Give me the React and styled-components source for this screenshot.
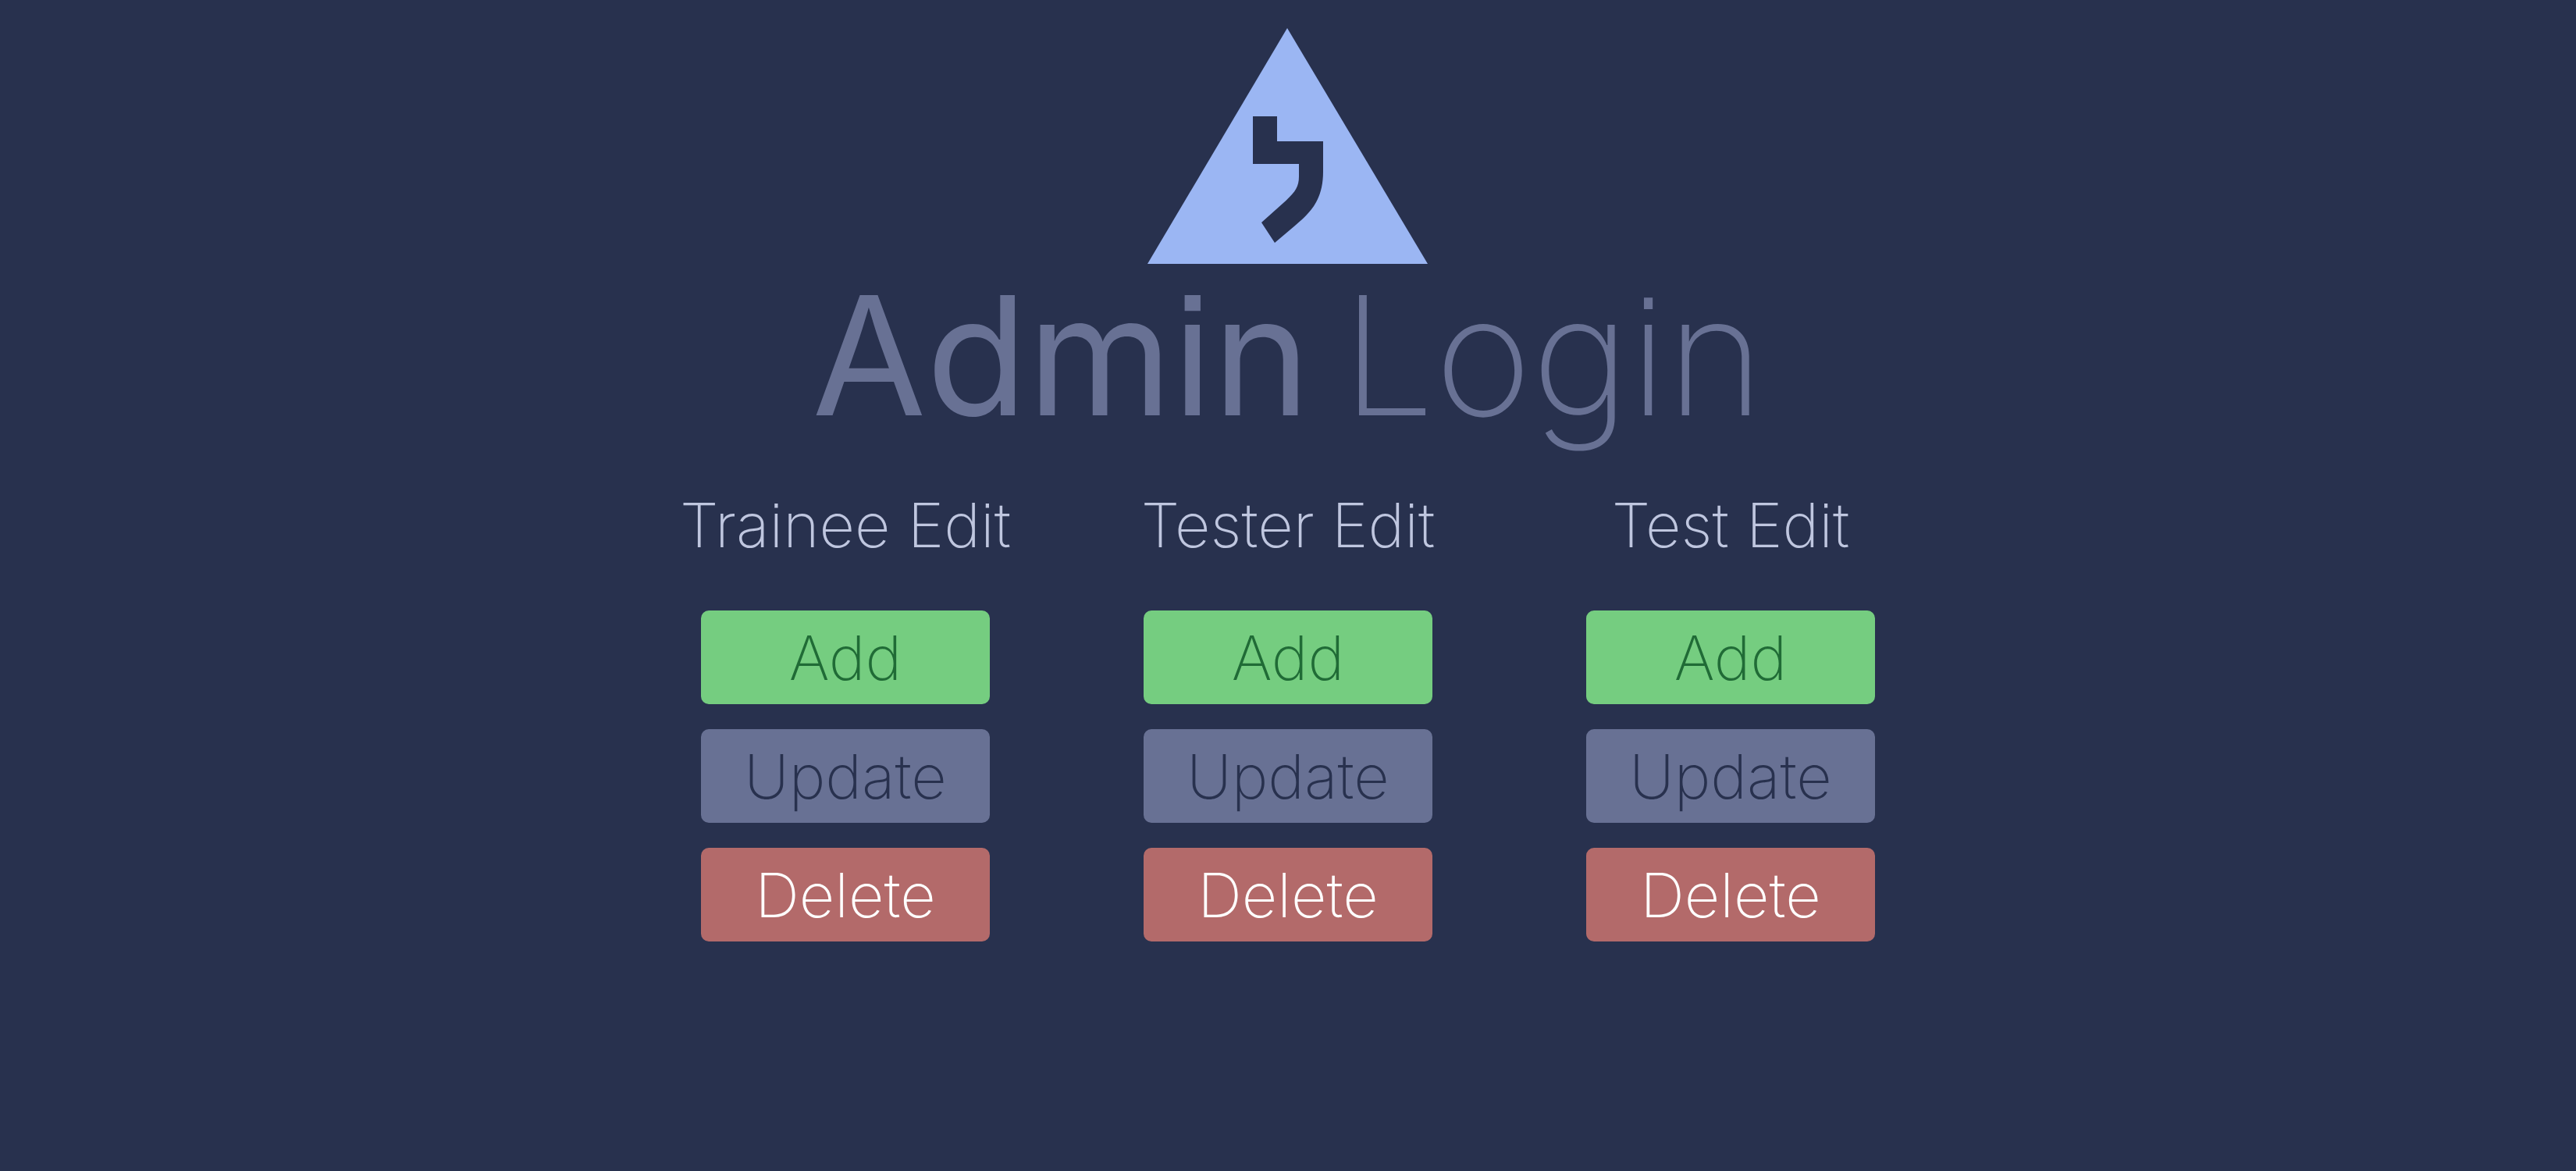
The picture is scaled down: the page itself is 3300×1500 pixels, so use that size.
import React from "react";
import styled, { createGlobalStyle } from "styled-components";

const Global = createGlobalStyle`
  * { box-sizing: border-box; }
  body { margin: 0; background: #28314e; font-family: Inter, "Open Sans", sans-serif; font-feature-settings: "ss07"; }
`;

const Page = styled.main`
  min-height: 100vh;
  display: flex;
  flex-direction: column;
  align-items: center;
  padding-top: 36px;
`;

const Logo = styled.svg`
  width: 360px;
  height: 302px;
  display: block;
`;

const Title = styled.h1`
  display: flex;
  gap: 40px;
  margin: 0;
  font-size: 212px;
  line-height: 234px;
  font-weight: 200;
  color: #687194;
  white-space: nowrap;
`;

const Strong = styled.span`
  font-weight: 380;
`;

const Columns = styled.div`
  display: grid;
  grid-template-columns: repeat(3, 370px);
  column-gap: 197px;
  margin-top: 52px;
`;

const Column = styled.section`
  display: flex;
  flex-direction: column;
  align-items: center;
  gap: 32px;
`;

const Heading = styled.h2`
  margin: 0 0 30px;
  font-size: 79px;
  line-height: 96px;
  font-weight: 200;
  color: #bfc6df;
  white-space: nowrap;
`;

const Action = styled.button`
  width: 100%;
  height: 120px;
  padding: 0;
  border: 0;
  border-radius: 10px;
  font-family: inherit;
  font-feature-settings: inherit;
  font-size: 79px;
  line-height: 120px;
  font-weight: 200;
  background: ${(p) => p.$bg};
  color: ${(p) => p.$fg};
`;

const groups = ["Trainee Edit", "Tester Edit", "Test Edit"];

export default function App() {
  return (
    <>
      <Global />
      <Page>
        <Logo viewBox="0 0 360 302" aria-hidden="true">
          <path d="M179 0 359 302H0Z" fill="#9bb6f3" />
          <path d="M135 113h31v32H225v39C225 220 209 236 189 253L163 275 146 249 174 224C188 211 194 205 194 190V174H135Z" fill="#28314e" />
        </Logo>
        <Title>
          <Strong>Admin</Strong>{" "}
          <span>Login</span>
        </Title>
        <Columns>
          {groups.map((g) => (
            <Column key={g}>
              <Heading>{g}</Heading>
              <Action $bg="#75cd80" $fg="#206b36">Add</Action>
              <Action $bg="#687194" $fg="#28314e">Update</Action>
              <Action $bg="#b36a6a" $fg="#ffffff">Delete</Action>
            </Column>
          ))}
        </Columns>
      </Page>
    </>
  );
}
